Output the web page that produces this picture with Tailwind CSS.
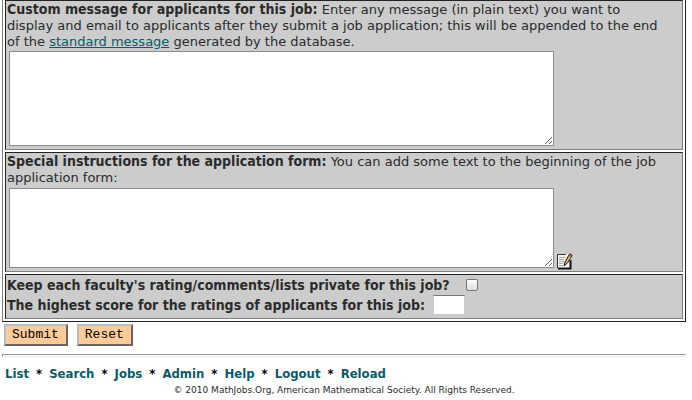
<!DOCTYPE html>
<html lang="en">
<head>
  <meta charset="utf-8">
  <meta name="viewport" content="width=device-width, initial-scale=1">
  <title>MathJobs.Org</title>
  <script src="https://cdn.jsdelivr.net/npm/@tailwindcss/browser@4"></script>
</head>
<body class="bg-white pl-[2px] pr-[6px] font-['DejaVu_Sans',sans-serif] text-[13px] leading-4 text-[#2b2b2b]">
  <form>
    <div class="flex flex-col gap-[2px] border border-t-0 border-l-[#808080] border-r-[#222] border-b-[#222] px-[2px] pb-[2px]">
      <!-- Custom message -->
      <section class="border border-t-[#222] border-l-[#222] border-r-[#808080] border-b-[#808080] bg-[#ccc] px-px pb-[3px]">
        <p>
          <label for="custom_message" class="font-['DejaVu_Sans_Condensed',sans-serif] text-[14px] font-bold leading-4">Custom message for applicants for this job:</label>
          Enter any message (in plain text) you want to<br>
          display and email to applicants after they submit a job application; this will be appended to the end<br>
          of the <a href="#" class="text-[#0c5a66] underline">standard message</a> generated by the database.
        </p>
        <textarea id="custom_message" class="mt-px ml-[2px] block h-[95px] w-[545px] max-w-full border border-[#8c8c8c] bg-white"></textarea>
      </section>

      <!-- Special instructions -->
      <section class="border border-t-[#222] border-l-[#222] border-r-[#808080] border-b-[#808080] bg-[#ccc] px-px pb-[3px]">
        <p>
          <label for="instructions" class="font-['DejaVu_Sans_Condensed',sans-serif] text-[14px] font-bold leading-4">Special instructions for the application form:</label>
          You can add some text to the beginning of the job<br>
          application form:
        </p>
        <div class="mt-[2px] ml-[2px] flex items-end gap-[3px]">
          <textarea id="instructions" class="block h-20 w-[545px] max-w-full border border-[#8c8c8c] bg-white"></textarea>
          <button type="button" aria-label="Edit" class="-mb-[2px]">
            <svg class="block" width="16" height="17" viewBox="0 0 16 17">
              <path d="M1 1h12v14H1z" fill="#f4f4f0" />
              <path d="M0.500 1.500V15M0.500 1.500H9" fill="none" stroke="#333" />
              <path d="M1 15.500H13.500V7" fill="none" stroke="#111" stroke-width="2" />
              <path d="M2 4.500h6M2 6.500h5M2 8.500h5M2 10.500h4M2 12.500h4" stroke="#a8a8a8" />
              <path d="M7 13l1-4 4.500-8 2.500 1.500-4.500 7.500z" fill="#c98f4e" stroke="#222" />
              <path d="M12.500 1l2.500 1.500" stroke="#8b3a2b" stroke-width="2" />
              <path d="M9.500 9l3.500-5" stroke="#f3d09a" />
            </svg>
          </button>
        </div>
      </section>

      <!-- Ratings -->
      <section class="border border-t-[#222] border-l-[#222] border-r-[#808080] border-b-[#808080] bg-[#ccc] px-px pb-[3px] font-['DejaVu_Sans_Condensed',sans-serif] text-[14px] font-bold leading-4">
        <div class="flex h-5 items-center gap-4">
          <label for="private">Keep each faculty's rating/comments/lists private for this job?</label>
          <input id="private" type="checkbox" class="size-3 appearance-none rounded-[2px] border border-[#777] bg-linear-to-b from-white to-[#ddd] checked:bg-[#0c5a66]">
        </div>
        <div class="flex h-5 items-center gap-2">
          <label for="max_score">The highest score for the ratings of applicants for this job:</label>
          <input id="max_score" type="text" class="h-5 w-8 border border-[#ccc] border-t-[#777] bg-white px-1 text-[12px] font-normal">
        </div>
      </section>
    </div>

    <div class="flex gap-[9px] pt-[2px] pl-[2px] font-['Liberation_Mono',monospace] text-[13px] leading-4 text-black">
      <button type="submit" class="border-2 border-t-[#bbb] border-l-[#bbb] border-r-[#666] border-b-[#666] bg-[#fc9] py-px pr-[7px] pl-[6px]">Submit</button>
      <button type="reset" class="border-2 border-t-[#bbb] border-l-[#bbb] border-r-[#666] border-b-[#666] bg-[#fc9] py-px pr-[7px] pl-[6px]">Reset</button>
    </div>
  </form>

  <hr class="mt-2 h-[3px] border border-t-[#999] border-r-[#eee] border-b-[#eee] border-l-[#999]">

  <footer class="pt-[7px]">
    <nav class="flex gap-[7px] pl-[3px] font-['DejaVu_Sans_Condensed',sans-serif] text-[13px] font-bold leading-5 text-black">
      <a href="#" class="text-[#0c5a66]">List</a><span>*</span>
      <a href="#" class="text-[#0c5a66]">Search</a><span>*</span>
      <a href="#" class="text-[#0c5a66]">Jobs</a><span>*</span>
      <a href="#" class="text-[#0c5a66]">Admin</a><span>*</span>
      <a href="#" class="text-[#0c5a66]">Help</a><span>*</span>
      <a href="#" class="text-[#0c5a66]">Logout</a><span>*</span>
      <a href="#" class="text-[#0c5a66]">Reload</a>
    </nav>
    <p class="text-center text-[9px] leading-3">© 2010 MathJobs.Org, American Mathematical Society. All Rights Reserved.</p>
  </footer>
</body>
</html>
